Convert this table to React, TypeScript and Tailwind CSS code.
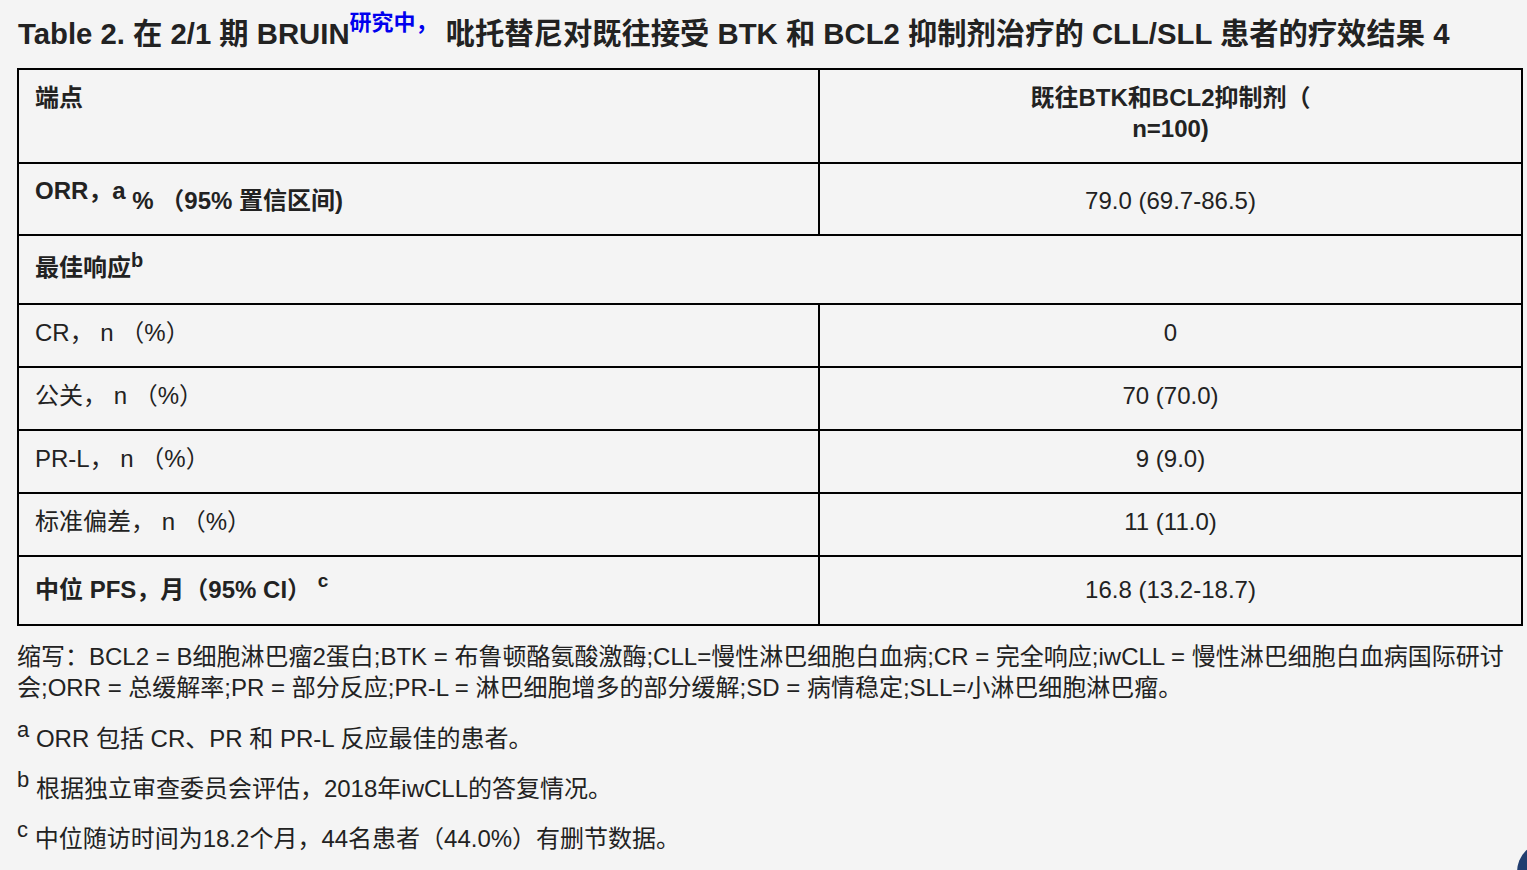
import React from "react";

const font = "font-['Liberation_Sans','Noto_Sans_CJK_SC',sans-serif]";

const rows = [
  { label: "CR， n （%）", value: "0" },
  { label: "公关， n （%）", value: "70 (70.0)" },
  { label: "PR-L， n （%）", value: "9 (9.0)" },
  { label: "标准偏差， n （%）", value: "11 (11.0)" },
];

const cell = "border-2 border-black px-4 pb-0 align-top leading-[31px]";

export default function App() {
  return (
    <div className={`relative min-h-[870px] w-full overflow-hidden bg-[#f4f4f4] text-[#222] ${font}`}>
      <h2 className="h-[68px] pl-[18px] pt-[14px] text-[29.3px] font-bold leading-[40px] text-[#222]">
        Table 2. 在 2/1 期 BRUIN
        <sup className="top-[-14px] text-[22px] font-bold text-[#0000ee]">研究中，</sup>{" "}
        吡托替尼对既往接受 BTK 和 BCL2 抑制剂治疗的 CLL/SLL 患者的疗效结果 4
      </h2>

      <table className="ml-[17px] w-[1506px] table-fixed border-collapse text-[24px]">
        <colgroup>
          <col className="w-[801px]" />
          <col />
        </colgroup>
        <tbody>
          <tr className="h-[94px]">
            <td className={`${cell} pt-[12px] font-bold`}>端点</td>
            <td className={`${cell} pt-[12px] text-center font-bold`}>
              既往BTK和BCL2抑制剂（
              <br />
              n=100)
            </td>
          </tr>
          <tr className="h-[72px]">
            <td className={`${cell} pt-[21px] font-bold`}>
              <sup className="top-[-10px] text-[24px]">ORR，a</sup> % （95% 置信区间)
            </td>
            <td className={`${cell} pt-[21px] text-center`}>79.0 (69.7-86.5)</td>
          </tr>
          <tr className="h-[69px]">
            <td colSpan={2} className={`${cell} pt-[16px] font-bold`}>
              最佳响应<sup className="top-[-9px] text-[20px]">b</sup>
            </td>
          </tr>
          {rows.map((r) => (
            <tr key={r.label} className="h-[63px]">
              <td className={`${cell} pt-[12px]`}>{r.label}</td>
              <td className={`${cell} pt-[12px] text-center`}>{r.value}</td>
            </tr>
          ))}
          <tr className="h-[69px]">
            <td className={`${cell} pt-[17px] font-bold`}>
              中位 PFS，月（95% CI） <sup className="top-[-11px] text-[19px]">c</sup>
            </td>
            <td className={`${cell} pt-[17px] text-center`}>16.8 (13.2-18.7)</td>
          </tr>
        </tbody>
      </table>

      <div className="mt-[15px] w-[1515px] pl-[17px] text-[24px] leading-[31px] text-[#222]">
        <p>
          缩写：BCL2 = B细胞淋巴瘤2蛋白;BTK = 布鲁顿酪氨酸激酶;CLL=慢性淋巴细胞白血病;CR = 完全响应;iwCLL = 慢性淋巴细胞白血病国际研讨
          <br />
          会;ORR = 总缓解率;PR = 部分反应;PR-L = 淋巴细胞增多的部分缓解;SD = 病情稳定;SLL=小淋巴细胞淋巴瘤。
        </p>
        <p className="mt-[20px]">
          <sup className="top-[-10px] text-[22px]">a</sup> ORR 包括 CR、PR 和 PR-L 反应最佳的患者。
        </p>
        <p className="mt-[19px]">
          <sup className="top-[-10px] text-[22px]">b</sup> 根据独立审查委员会评估，2018年iwCLL的答复情况。
        </p>
        <p className="mt-[19px]">
          <sup className="top-[-10px] text-[22px]">c</sup> 中位随访时间为18.2个月，44名患者（44.0%）有删节数据。
        </p>
      </div>

      <div className="fixed bottom-[-32px] right-[-50px] h-[60px] w-[60px] rounded-full bg-[#213d6f]" />
    </div>
  );
}
